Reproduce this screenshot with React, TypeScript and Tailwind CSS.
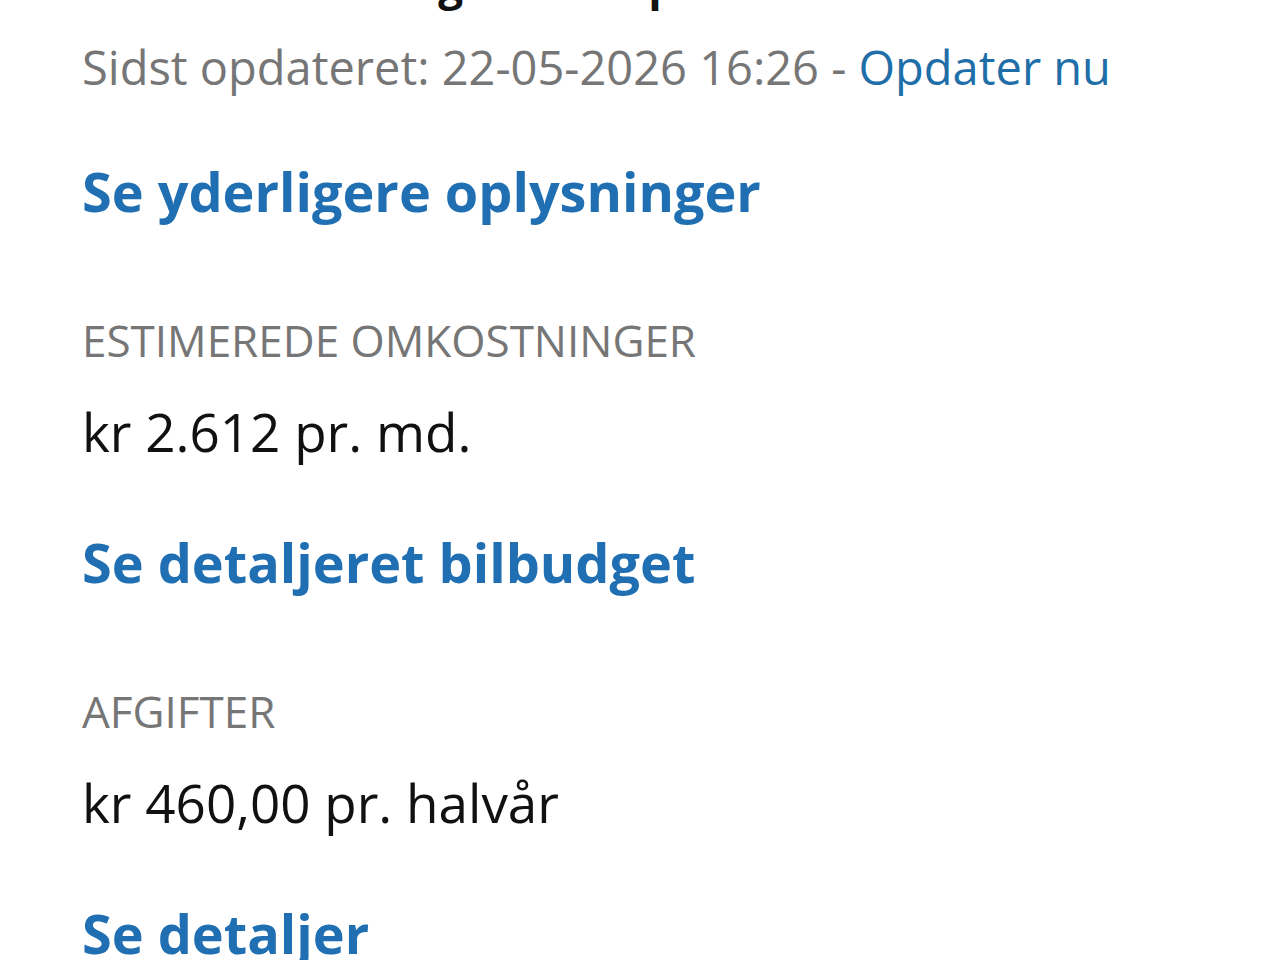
const sections = [
  {
    label: "ESTIMEREDE OMKOSTNINGER",
    value: "kr 2.612 pr. md.",
    link: "Se detaljeret bilbudget",
  },
  {
    label: "AFGIFTER",
    value: "kr 460,00 pr. halvår",
    link: "Se detaljer",
  },
]

export default function App() {
  return (
    <div className="h-screen overflow-hidden bg-white pl-[82px] font-['Open_Sans',sans-serif] text-[#111]">
      {/* heading scrolled past the top edge, only descenders show */}
      <h1 className="-mt-[47px] text-[44px] leading-[60px] font-bold whitespace-nowrap">
        Markedsværdi og handelspris
      </h1>

      <p className="mt-[22px] text-[47px] leading-[64px] text-[#767676] whitespace-nowrap">
        Sidst opdateret: 22-05-2026 16:26 -{" "}
        <a href="#" className="text-[#1f6ea8]">
          Opdater nu
        </a>
      </p>

      <a href="#" className="mt-[55px] block text-[54px] leading-[74px] font-bold text-[#1f6fb2] whitespace-nowrap">
        Se yderligere oplysninger
      </a>

      {sections.map((s) => (
        <section key={s.label}>
          <h2 className="mt-[82px] text-[44px] leading-[60px] text-[#767676] whitespace-nowrap">{s.label}</h2>
          <p className="mt-[26px] text-[53px] leading-[72px] whitespace-nowrap">{s.value}</p>
          <a href="#" className="mt-[57px] block text-[54px] leading-[74px] font-bold text-[#1f6fb2] whitespace-nowrap">
            {s.link}
          </a>
        </section>
      ))}
    </div>
  )
}
